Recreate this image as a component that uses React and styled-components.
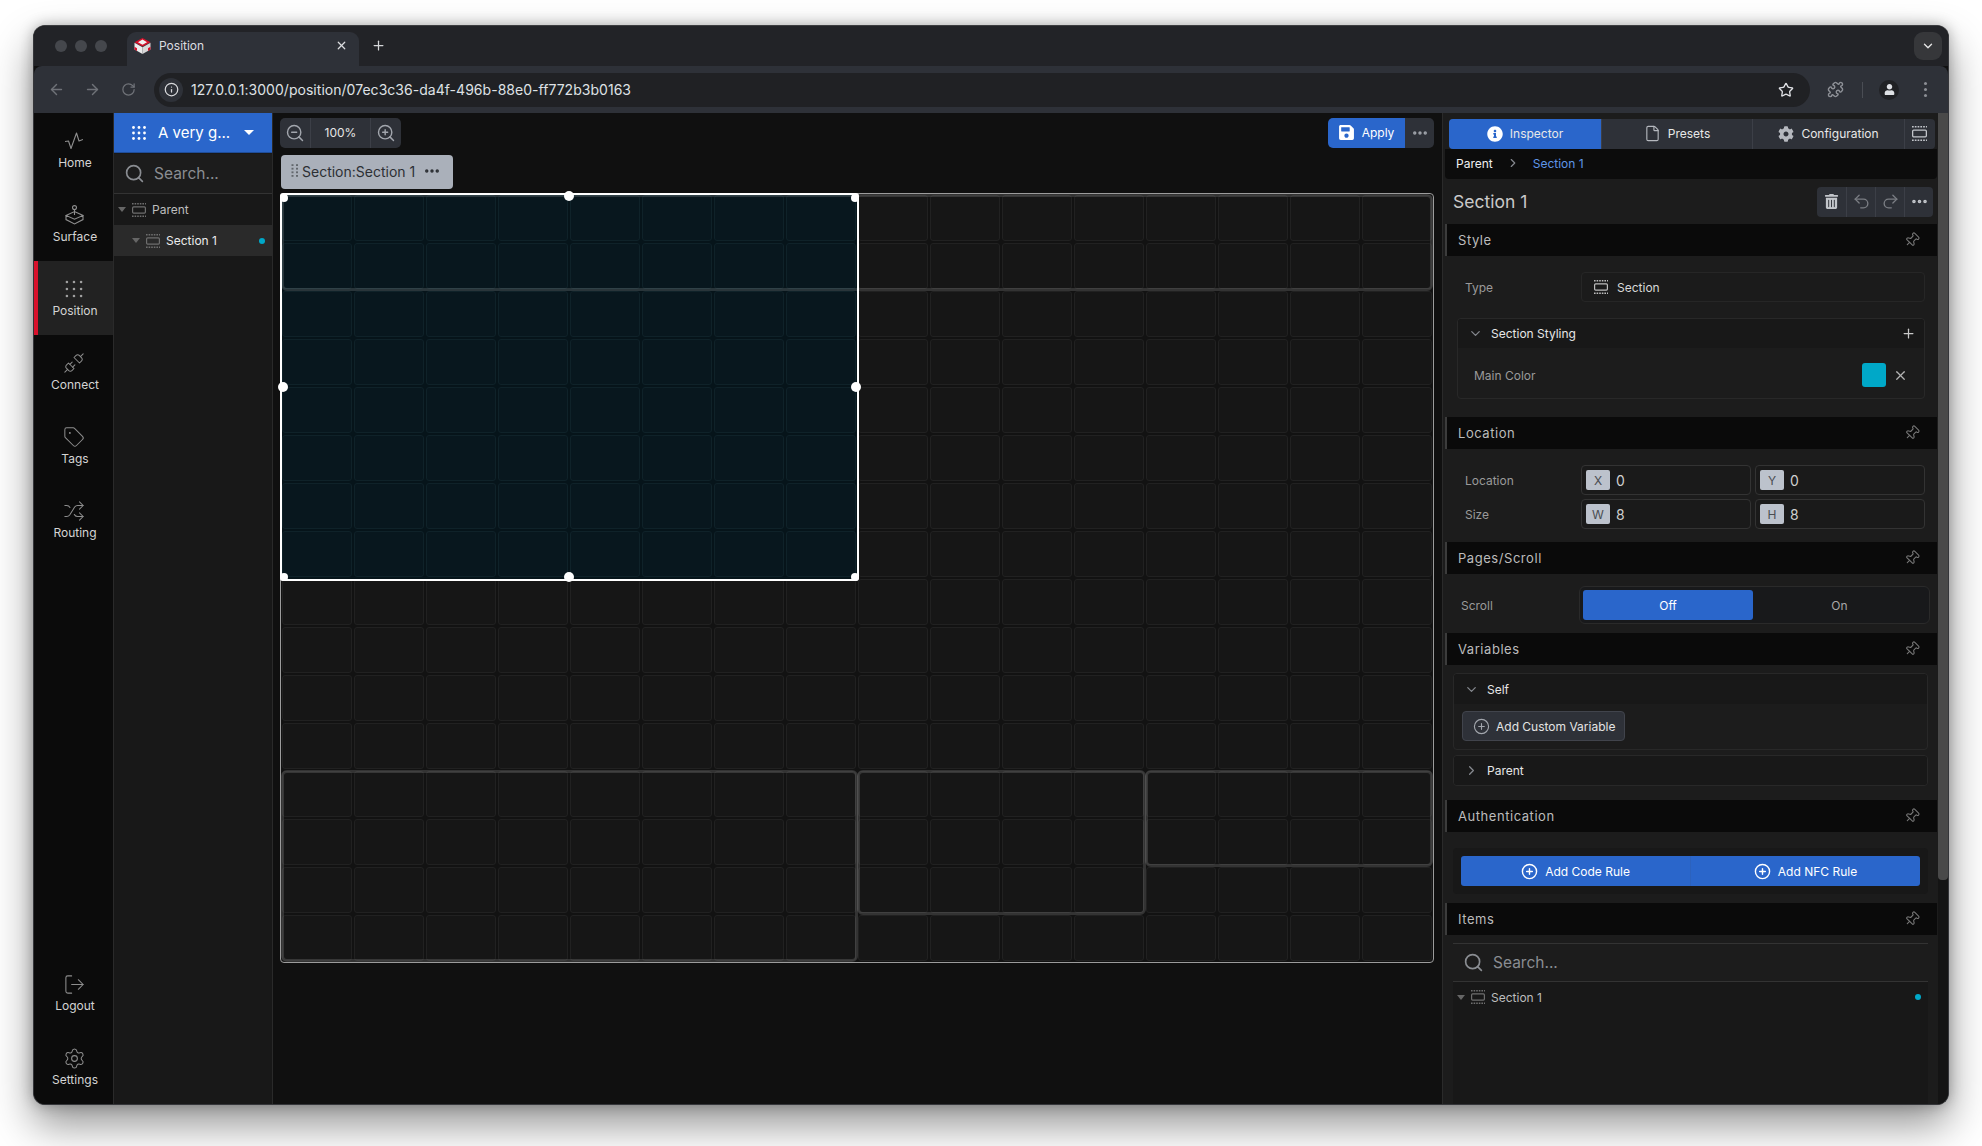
import React from 'react';
import styled, { createGlobalStyle } from 'styled-components';
import {
  ArrowLeft, ArrowRight, RotateCw, Info, Star, Puzzle, ChevronDown, ChevronRight, Plus, X, Search,
  ZoomIn, ZoomOut, Unplug, Tag, Shuffle, LogOut, Settings, File, Undo2, Redo2, Pin, CirclePlus, Ellipsis,
} from 'lucide-react';
import { FaCog, FaSave, FaTrashAlt, FaInfoCircle, FaUser } from 'react-icons/fa';

const Global = createGlobalStyle`
  html, body { margin: 0; padding: 0; background: #fff; }
  body { font-family: Inter, "Liberation Sans", sans-serif; width: 1982px; height: 1146px; overflow: hidden; }
  * { box-sizing: border-box; }
`;

const Page = styled.div`
  padding: 25px 0 0 33px;
`;
const Win = styled.div`
  width: 1916px;
  height: 1080px;
  border-radius: 12px;
  overflow: hidden;
  background: #101010;
  display: flex;
  flex-direction: column;
  box-shadow: 0 20px 42px rgba(0,0,0,.42), 0 0 14px rgba(0,0,0,.28);
  border: 1px solid #35363a;
  border-top-color: #3c3d40;
`;

/* browser chrome */
const TabStrip = styled.div`
  height: 40px;
  flex: none;
  background: #222327;
  display: flex;
  align-items: flex-end;
  padding-left: 21px;
`;
const Lights = styled.div`
  display: flex;
  gap: 8px;
  height: 34px;
  padding-top: 8px;
  width: 72px;
`;
const Light = styled.span`
  width: 12px;
  height: 12px;
  border-radius: 50%;
  background: #45474c;
`;
const BrowserTab = styled.div`
  width: 232px;
  height: 34px;
  background: #2e3138;
  border-radius: 9px 9px 0 0;
  display: flex;
  align-items: center;
  padding: 0 11px 7px 7px;
  gap: 8px;
  color: #dcdde0;
  font-size: 12px;
`;
const TabTitle = styled.span`
  flex: 1;
`;
const NewTab = styled.div`
  height: 34px;
  width: 38px;
  padding-bottom: 7px;
  display: flex;
  align-items: center;
  justify-content: center;
  color: #d5d6d9;
`;
const StripSpacer = styled.div`
  flex: 1;
`;
const TabMenu = styled.div`
  width: 28px;
  height: 28px;
  margin: 0 6px 6px 0;
  border-radius: 9px;
  background: #36373a;
  color: #e3e3e3;
  display: flex;
  align-items: center;
  justify-content: center;
`;
const Toolbar = styled.div`
  height: 47px;
  flex: none;
  background: #2e3138;
  border-radius: 8px 8px 0 0;
  display: flex;
  align-items: center;
  padding: 0 0 0 4px;
  color: #6f7278;
`;
const NavBtn = styled.div`
  width: 36px;
  display: flex;
  justify-content: center;
  color: #6f7278;
`;
const Address = styled.div`
  width: 1656px;
  height: 34px;
  margin-left: 8px;
  border-radius: 17px;
  background: #202124;
  display: flex;
  align-items: center;
  padding: 0 16px 0 5px;
  color: #dfe1e5;
`;
const InfoBadge = styled.div`
  width: 24px;
  height: 24px;
  border-radius: 50%;
  background: #2e3138;
  display: flex;
  align-items: center;
  justify-content: center;
  color: #d7d8db;
  margin-right: 8px;
`;
const Url = styled.span`
  flex: 1;
  font-size: 14px;
  letter-spacing: .03px;
  padding-bottom: 1px;
`;
const ToolRight = styled.div`
  display: flex;
  align-items: center;
  margin-left: 17px;
  color: #8c8f95;
`;
const Sep = styled.span`
  width: 1px;
  height: 16px;
  background: #4a4d54;
  margin: 0 16px 0 18px;
`;
const Avatar = styled.div`
  width: 20px;
  height: 20px;
  border-radius: 50%;
  background: #202124;
  color: #dfe1e5;
  display: flex;
  align-items: center;
  justify-content: center;
  margin-right: 25px;
`;
const VDots = styled.div`
  display: flex;
  flex-direction: column;
  gap: 3px;
`;
const VDot = styled.span`
  width: 3px;
  height: 3px;
  border-radius: 50%;
  background: #8c8f95;
`;

/* app */
const AppBody = styled.div`
  flex: 1;
  min-height: 0;
  display: flex;
`;
const Sidebar = styled.nav`
  width: 80px;
  flex: none;
  background: #0b0b0b;
  border-right: 1px solid #2a2a2a;
  display: flex;
  flex-direction: column;
`;
const SideSpacer = styled.div`
  flex: 1;
`;
const SideItem = styled.div`
  height: 74px;
  flex: none;
  display: flex;
  flex-direction: column;
  align-items: center;
  padding: ${p => p.$pt}px 0 0 3px;
  gap: 2px;
  color: #d4d4d4;
  font-size: 12px;
  line-height: 15px;
  background: ${p => (p.$active ? '#222222' : 'transparent')};
  box-shadow: ${p => (p.$active ? 'inset 4px 0 0 #d8112b' : 'none')};
`;
const SideIcon = styled.div`
  height: 24px;
  margin: 1px 2px 0 0;
  display: flex;
  align-items: center;
  justify-content: center;
  color: #8e8e8e;
`;
const Tree = styled.div`
  width: 159px;
  flex: none;
  background: #181818;
  border-right: 1px solid #2a2a2a;
  display: flex;
  flex-direction: column;
`;
const ProjectHead = styled.div`
  height: 40px;
  background: #2a66cb;
  color: #fff;
  display: flex;
  align-items: center;
  padding: 0 18px;
  font-size: 15px;
  gap: 12px;
  border-bottom: 1px solid #1f4d99;
`;
const ProjectName = styled.span`
  flex: 1;
  white-space: nowrap;
`;
const CaretDown = styled.span`
  width: 0;
  height: 0;
  flex: none;
  border-left: ${p => p.$s || 5}px solid transparent;
  border-right: ${p => p.$s || 5}px solid transparent;
  border-top: ${p => (p.$s ? p.$s + 1 : 5)}px solid ${p => p.$c || '#fff'};
`;
const SearchBox = styled.div`
  height: 41px;
  display: flex;
  align-items: center;
  gap: 9px;
  padding-left: 10px;
  background: #1c1c1c;
  border-top: 1px solid #181818;
  border-bottom: 1px solid #333;
  color: #8a8d92;
  font-size: 15.5px;
`;
const TreeRow = styled.div`
  height: 31px;
  display: flex;
  align-items: center;
  padding-left: ${p => p.$indent}px;
  gap: 6px;
  font-size: 12px;
  color: ${p => (p.$sel ? '#ececec' : '#bdbdbd')};
  background: ${p => (p.$sel ? '#2a2a2a' : 'transparent')};
  padding-right: 7px;
`;
const RowText = styled.span`
  flex: 1;
`;
const Dot = styled.span`
  width: 6px;
  height: 6px;
  border-radius: 50%;
  background: #00a8c8;
`;

const Main = styled.main`
  flex: 1;
  min-width: 0;
  background: #101010;
  padding: 5px 8px 0 7px;
  display: flex;
  flex-direction: column;
`;
const TopBar = styled.div`
  display: flex;
  justify-content: space-between;
  height: 30px;
`;
const ZoomGroup = styled.div`
  display: flex;
  width: 121px;
  height: 30px;
  background: #2e3138;
  border-radius: 5px;
  color: #a2a6ad;
  align-items: center;
`;
const ZoomBtn = styled.div`
  width: 30px;
  height: 30px;
  display: flex;
  align-items: center;
  justify-content: center;
`;
const ZoomValue = styled.div`
  flex: 1;
  height: 30px;
  line-height: 29px;
  text-align: center;
  color: #e6e6e6;
  font-size: 12px;
  border-left: 1px solid #3c3f47;
  border-right: 1px solid #3c3f47;
`;
const ApplyGroup = styled.div`
  display: flex;
  height: 30px;
  border-radius: 5px;
  overflow: hidden;
`;
const ApplyBtn = styled.div`
  width: 77px;
  background: #2a66cb;
  color: #fff;
  font-size: 12px;
  display: flex;
  align-items: center;
  justify-content: center;
  gap: 7px;
  padding: 0 1px 1px 0;
`;
const ApplyMore = styled.div`
  width: 29px;
  background: #2e3138;
  color: #9ea2a9;
  display: flex;
  align-items: center;
  justify-content: center;
`;
const ItemLabel = styled.div`
  margin: 7px 0 4px 1px;
  width: 172px;
  height: 34px;
  flex: none;
  background: #aab0ba;
  color: #2c2f34;
  border-radius: 4px;
  font-size: 14px;
  display: flex;
  align-items: center;
  padding: 0 0 2px 10px;
  gap: 3px;
  & > svg:last-child { margin-left: 5px; }
`;
const Canvas = styled.div`
  position: relative;
  width: 1154px;
  height: 770px;
  flex: none;
  border: 1px solid #9c9c9c;
  border-radius: 4px;
  background: #121212;
`;
const SelectedBack = styled.div`
  position: absolute;
  left: 0;
  top: 0;
  width: 577px;
  height: 385px;
  background: #06141a;
`;
const CellGrid = styled.div`
  position: relative;
  display: grid;
  grid-template-columns: repeat(16, 72px);
  grid-template-rows: repeat(16, 48px);
`;
const Cell = styled.div`
  margin: 1px;
  border-radius: 3px;
  border: 1px solid ${p => (p.$sel ? '#0f2229' : '#212121')};
  background: ${p => (p.$sel ? '#08171e' : '#161616')};
`;
const SectionLayer = styled.div`
  position: absolute;
  inset: 0;
  display: grid;
  grid-template-columns: repeat(16, 72px);
  grid-template-rows: repeat(16, 48px);
`;
const SectionBox = styled.div`
  grid-column: ${p => p.$c + 1} / span ${p => p.$w};
  grid-row: ${p => p.$r + 1} / span ${p => p.$h};
  margin: 0 ${p => (p.$c + p.$w === 16 ? '0' : '-1px')} ${p => (p.$r + p.$h === 16 ? '0' : '-1px')} 0;
  border: 3px solid rgba(255,255,255,.14);
  border-radius: 6px;
`;
const SelectedFrame = styled.div`
  position: absolute;
  left: -1px;
  top: -1px;
  width: 579px;
  height: 388px;
  border: 2px solid #fff;
  border-radius: 3px;
`;
const Handle = styled.span`
  position: absolute;
  width: ${p => p.$s}px;
  height: ${p => p.$s}px;
  border-radius: 50%;
  background: #fff;
  left: ${p => p.$x}px;
  top: ${p => p.$y}px;
`;

/* right panel */
const Panel = styled.aside`
  width: 506px;
  flex: none;
  background: #1c1c1c;
  border-left: 1px solid #2a2a2a;
  display: flex;
`;
const PanelBody = styled.div`
  flex: 1;
  min-width: 0;
  display: flex;
  flex-direction: column;
`;
const ScrollTrack = styled.div`
  width: 10px;
  flex: none;
  background: #141414;
`;
const ScrollThumb = styled.div`
  height: 767px;
  background: #494949;
  border-radius: 0 0 4px 4px;
`;
const Tabs = styled.div`
  margin: 6px 3px 0 6px;
  height: 30px;
  flex: none;
  display: flex;
  background: #2e3138;
  border-radius: 4px;
  overflow: hidden;
`;
const TabBtn = styled.div`
  width: ${p => p.$w}px;
  flex: none;
  display: flex;
  align-items: center;
  justify-content: center;
  gap: 7px;
  font-size: 12px;
  padding-bottom: 1px;
  color: #e8e8e8;
  background: ${p => (p.$on ? '#2a66cb' : 'transparent')};
  border-left: ${p => (p.$first ? 'none' : '1px solid #3c3f47')};
  & > svg { color: ${p => (p.$on ? '#fff' : '#b5b8be')}; }
`;
const Crumbs = styled.div`
  height: 30px;
  flex: none;
  margin: 0 1px 0 2px;
  background: #0c0c0c;
  border-radius: 0 0 4px 4px;
  display: flex;
  align-items: center;
  padding: 0 0 2px 11px;
  font-size: 12px;
  color: #f0f0f0;
  gap: 13px;
  & > svg { color: #85888e; }
`;
const CrumbActive = styled.span`
  color: #5f96e8;
`;
const TitleRow = styled.div`
  height: 45px;
  flex: none;
  display: flex;
  align-items: center;
  justify-content: space-between;
  padding: 0 5px 0 10px;
  font-size: 17.5px;
  color: #c9c9c9;
`;
const ActionGroup = styled.div`
  display: flex;
  height: 30px;
  background: #2e3138;
  border-radius: 4px;
  overflow: hidden;
`;
const ActionBtn = styled.div`
  width: 29px;
  display: flex;
  align-items: center;
  justify-content: center;
  color: ${p => p.$c || '#7a7d83'};
  border-left: ${p => (p.$first ? 'none' : '1px solid #3c3f47')};
`;
const SectionHead = styled.div`
  height: 32px;
  flex: none;
  margin: 0 1px 0 2px;
  background: #0a0a0a;
  border-left: 2px solid #3c3c3c;
  display: flex;
  align-items: center;
  justify-content: space-between;
  padding: 0 17px 0 11px;
  font-size: 13px;
  letter-spacing: .55px;
  color: #bcbcbc;
  & > svg { color: #787878; transform: rotate(45deg); }
`;
const SectionBody = styled.div`
  padding: ${p => p.$t}px ${p => p.$r}px ${p => p.$b}px ${p => p.$l}px;
  flex: none;
  display: flex;
  flex-direction: column;
  gap: ${p => p.$g || 0}px;
`;
const FieldRow = styled.div`
  display: flex;
  align-items: center;
  gap: 4px;
`;
const FieldLabel = styled.div`
  width: ${p => p.$w || 120}px;
  flex: none;
  padding-left: ${p => p.$pl ?? 8}px;
  font-size: 12px;
  color: #9a9a9a;
`;
const TypeBox = styled.div`
  flex: 1;
  height: 30px;
  border: 1px solid #262626;
  border-radius: 4px;
  display: flex;
  align-items: center;
  padding-left: 12px;
  gap: 9px;
  color: #d8d8d8;
  font-size: 12px;
  background: #1b1b1b;
`;
const Card = styled.div`
  border: 1px solid #282828;
  border-radius: 4px;
  overflow: hidden;
`;
const CardHead = styled.div`
  height: ${p => p.$h || 29}px;
  display: flex;
  align-items: center;
  gap: 8px;
  padding: 0 ${p => p.$pr || 9}px 0 10px;
  background: #181818;
  font-size: 12px;
  color: #e6e6e6;
  & > svg { color: #85888e; flex: none; }
`;
const Grow = styled.span`
  flex: 1;
`;
const ColorRow = styled.div`
  height: 50px;
  display: flex;
  align-items: center;
  padding: 4px 16px 0 16px;
  font-size: 12px;
  color: #9a9a9a;
  & > svg { color: #b4b4b4; margin-left: 7px; }
`;
const Swatch = styled.span`
  width: 24px;
  height: 24px;
  border-radius: 3px;
  background: #00a8c8;
`;
const NumBox = styled.div`
  flex: 1;
  height: 30px;
  border: 1px solid #333;
  border-radius: 4px;
  display: flex;
  align-items: center;
  padding-left: 4px;
  gap: 6px;
  font-size: 14px;
  color: #cfcfcf;
  background: #1a1a1a;
`;
const Chip = styled.span`
  width: 24px;
  height: 20px;
  border-radius: 2px;
  background: #bcc2cc;
  color: #4a4d52;
  font-size: 12px;
  display: flex;
  align-items: center;
  justify-content: center;
`;
const Segmented = styled.div`
  flex: 1;
  height: 38px;
  border: 1px solid #2a2a2a;
  border-radius: 6px;
  padding: 3px;
  display: flex;
  background: #18191b;
`;
const Seg = styled.div`
  flex: ${p => (p.$on ? '0 0 170px' : '1')};
  border-radius: 3px;
  display: flex;
  align-items: center;
  justify-content: center;
  font-size: 12px;
  color: ${p => (p.$on ? '#fff' : '#a8a8a8')};
  background: ${p => (p.$on ? '#2a66cb' : 'transparent')};
`;
const VarBtn = styled.div`
  margin: 7px 0 8px 8px;
  width: 163px;
  height: 30px;
  background: #2e3138;
  border: 1px solid #41444c;
  border-radius: 4px;
  display: flex;
  align-items: center;
  padding-left: 10px;
  gap: 6px;
  color: #e4e4e4;
  font-size: 12px;
  & > svg { color: #a2a6ad; }
`;
const RuleCard = styled.div`
  background: #181818;
  border-radius: 4px;
  padding: 8px;
`;
const RuleGroup = styled.div`
  display: flex;
  height: 30px;
  border-radius: 3px;
  overflow: hidden;
  background: #2a66cb;
`;
const RuleBtn = styled.div`
  flex: 1;
  display: flex;
  align-items: center;
  justify-content: center;
  gap: 7px;
  color: #fff;
  font-size: 12px;
  border-left: ${p => (p.$first ? 'none' : '1px solid #2c62bd')};
`;
const ItemList = styled.div`
  flex: 1;
  margin: 0 10px;
  background: #181818;
`;
const ItemsSearch = styled(SearchBox)`
  margin: 8px 10px 0;
  height: 39px;
  border-top: 1px solid #333;
`;
const ItemRow = styled(TreeRow)`
  height: 30px;
  padding: 0 7px 0 4px;
`;

const SectionIcon = ({ c = '#6e6e6e', w = 14, h = 14 }) => (
  <svg width={w} height={h} viewBox="0 0 14 14" fill="none" stroke={c}>
    <path d="M0 .8h14M0 13.2h14" strokeDasharray="1.6 1" strokeWidth="1.4" />
    <rect x=".6" y="3.9" width="12.8" height="6.2" rx="1" strokeWidth="1.2" />
  </svg>
);
const DotGrid = ({ s = 14, r = 1.4, c = '#fff' }) => (
  <svg width={s} height={s} viewBox="0 0 14 14" fill={c}>
    {[1.5, 7, 12.5].flatMap(y => [1.5, 7, 12.5].map(x => <circle key={x + '-' + y} cx={x} cy={y} r={r} />))}
  </svg>
);
const DragDots = () => (
  <svg width="8" height="14" viewBox="0 0 8 14" fill="#62666c">
    {[1, 4.6, 8.2, 11.8].flatMap(y => [1.5, 6].map(x => <rect key={x + '-' + y} x={x - 1} y={y - .8} width="2" height="1.8" />))}
  </svg>
);
const Favicon = () => (
  <svg width="17" height="16" viewBox="0 0 17 16">
    <path d="M8.5 0 16.5 4.2 8.5 8.6.5 4.2Z" fill="#d5102a" />
    <path d="M8.5 1.6 13 4.2 8.5 6.8 4 4.2Z" fill="#f1f1f1" />
    <path d="M.5 4.8 8.5 9.2V16L.5 11.4Z" fill="#ececec" />
    <path d="M16.5 4.8 8.5 9.2V16L16.5 11.4Z" fill="#d8d8d8" />
    <path d="M.5 8.8 3 10.2V13L.5 11.4ZM16.5 8.8 14 10.2V13L16.5 11.4Z" fill="#d5102a" />
  </svg>
);
const Pulse = () => (
  <svg width="18" height="18" viewBox="0 0 18 18" fill="none" stroke="currentColor" strokeWidth="1.1" strokeLinejoin="round">
    <path d="M0 9.5 3.5 9 6 16.5 11.5 1 14 9 18 7.5" />
  </svg>
);
const Joystick = () => (
  <svg width="19" height="20" viewBox="0 0 19 20" fill="none" stroke="currentColor" strokeWidth="1.1">
    <circle cx="9.5" cy="2.6" r="2" />
    <path d="M9.5 4.6V10M1 10.4 9.5 6.6 18 10.4 9.5 14.2ZM1 10.4V14.6L9.5 19 18 14.6V10.4" />
  </svg>
);

const SideNav = ({ icon, label, active, pt = 15 }) => (
  <SideItem $active={active} $pt={pt}><SideIcon>{icon}</SideIcon><span>{label}</span></SideItem>
);
const Head = ({ children }) => (
  <SectionHead>{children}<Pin size={16} strokeWidth={1.6} /></SectionHead>
);

const cells = Array.from({ length: 256 }, (_, i) => ({ i, sel: i % 16 < 8 && i < 128 }));
const boxes = [
  { c: 0, r: 0, w: 16, h: 2 },
  { c: 0, r: 12, w: 8, h: 4 },
  { c: 8, r: 12, w: 4, h: 3 },
  { c: 12, r: 12, w: 4, h: 2 },
];
const handles = [
  { x: -2, y: -1, s: 8 }, { x: 282, y: -4, s: 10 }, { x: 569, y: -1, s: 8 },
  { x: -4, y: 187, s: 10 }, { x: 569, y: 187, s: 10 },
  { x: -2, y: 378, s: 8 }, { x: 282, y: 377, s: 10 }, { x: 569, y: 378, s: 8 },
];

export default function App() {
  return (
    <Page>
      <Global />
      <Win>
        <TabStrip>
          <Lights><Light /><Light /><Light /></Lights>
          <BrowserTab>
            <Favicon />
            <TabTitle>Position</TabTitle>
            <X size={13} strokeWidth={2.2} />
          </BrowserTab>
          <NewTab><Plus size={15} strokeWidth={2} /></NewTab>
          <StripSpacer />
          <TabMenu><ChevronDown size={14} strokeWidth={2.4} /></TabMenu>
        </TabStrip>
        <Toolbar>
          <NavBtn><ArrowLeft size={17} /></NavBtn>
          <NavBtn><ArrowRight size={17} /></NavBtn>
          <NavBtn><RotateCw size={15} /></NavBtn>
          <Address>
            <InfoBadge><Info size={15} /></InfoBadge>
            <Url>127.0.0.1:3000/position/07ec3c36-da4f-496b-88e0-ff772b3b0163</Url>
            <Star size={16} strokeWidth={2} />
          </Address>
          <ToolRight>
            <Puzzle size={17} />
            <Sep />
            <Avatar><FaUser size={11} /></Avatar>
            <VDots><VDot /><VDot /><VDot /></VDots>
          </ToolRight>
        </Toolbar>
        <AppBody>
          <Sidebar>
            <SideNav icon={<Pulse />} label="Home" />
            <SideNav icon={<Joystick />} label="Surface" />
            <SideNav icon={<DotGrid s={18} r={1} c="#a0a0a0" />} label="Position" active />
            <SideNav icon={<Unplug size={22} strokeWidth={1.1} />} label="Connect" />
            <SideNav icon={<Tag size={22} strokeWidth={1.1} />} label="Tags" />
            <SideNav icon={<Shuffle size={22} strokeWidth={1.1} />} label="Routing" />
            <SideSpacer />
            <SideNav icon={<LogOut size={23} strokeWidth={1.1} />} label="Logout" pt={15} />
            <SideNav icon={<Settings size={23} strokeWidth={1.1} />} label="Settings" pt={15} />
          </Sidebar>
          <Tree>
            <ProjectHead><DotGrid /><ProjectName>A very g...</ProjectName><CaretDown /></ProjectHead>
            <SearchBox><Search size={21} strokeWidth={1.9} />Search...</SearchBox>
            <TreeRow $indent={4}><CaretDown $s={4} $c="#666" /><SectionIcon /><RowText>Parent</RowText></TreeRow>
            <TreeRow $indent={18} $sel><CaretDown $s={4} $c="#666" /><SectionIcon /><RowText>Section 1</RowText><Dot /></TreeRow>
          </Tree>
          <Main>
            <TopBar>
              <ZoomGroup>
                <ZoomBtn><ZoomOut size={20} strokeWidth={1.7} /></ZoomBtn>
                <ZoomValue>100%</ZoomValue>
                <ZoomBtn><ZoomIn size={20} strokeWidth={1.7} /></ZoomBtn>
              </ZoomGroup>
              <ApplyGroup>
                <ApplyBtn><FaSave size={17} />Apply</ApplyBtn>
                <ApplyMore><Ellipsis size={18} strokeWidth={2.6} /></ApplyMore>
              </ApplyGroup>
            </TopBar>
            <ItemLabel><DragDots />Section:Section 1<Ellipsis size={18} strokeWidth={2.6} /></ItemLabel>
            <Canvas>
              <SelectedBack />
              <CellGrid>
                {cells.map(c => <Cell key={c.i} $sel={c.sel} />)}
              </CellGrid>
              <SectionLayer>
                {boxes.map(b => <SectionBox key={b.c + '-' + b.r} $c={b.c} $r={b.r} $w={b.w} $h={b.h} />)}
              </SectionLayer>
              <SelectedFrame>
                {handles.map(h => <Handle key={h.x + '-' + h.y} $x={h.x} $y={h.y} $s={h.s} />)}
              </SelectedFrame>
            </Canvas>
          </Main>
          <Panel>
            <PanelBody>
              <Tabs>
                <TabBtn $w={152} $on $first><FaInfoCircle size={16} />Inspector</TabBtn>
                <TabBtn $w={151}><File size={17} strokeWidth={1.6} />Presets</TabBtn>
                <TabBtn $w={152}><FaCog size={16} />Configuration</TabBtn>
                <TabBtn $w={30}><SectionIcon c="#c2c5ca" w={15} h={15} /></TabBtn>
              </Tabs>
              <Crumbs>
                <span>Parent</span>
                <ChevronRight size={14} />
                <CrumbActive>Section 1</CrumbActive>
              </Crumbs>
              <TitleRow>
                <span>Section 1</span>
                <ActionGroup>
                  <ActionBtn $first $c="#c2c5ca"><FaTrashAlt size={15} /></ActionBtn>
                  <ActionBtn><Undo2 size={19} strokeWidth={1.7} /></ActionBtn>
                  <ActionBtn><Redo2 size={19} strokeWidth={1.7} /></ActionBtn>
                  <ActionBtn $c="#c2c5ca"><Ellipsis size={19} strokeWidth={2.6} /></ActionBtn>
                </ActionGroup>
              </TitleRow>
              <Head>Style</Head>
              <SectionBody $t={16} $r={13} $b={18} $l={14} $g={16}>
                <FieldRow>
                  <FieldLabel>Type</FieldLabel>
                  <TypeBox><SectionIcon c="#bdbdbd" />Section</TypeBox>
                </FieldRow>
                <Card>
                  <CardHead $pr={8}>
                    <ChevronDown size={15} />
                    <Grow>Section Styling</Grow>
                    <Plus size={15} color="#c8c8c8" />
                  </CardHead>
                  <ColorRow>
                    <Grow>Main Color</Grow>
                    <Swatch />
                    <X size={15} strokeWidth={2} />
                  </ColorRow>
                </Card>
              </SectionBody>
              <Head>Location</Head>
              <SectionBody $t={16} $r={13} $b={13} $l={14} $g={4}>
                <FieldRow>
                  <FieldLabel>Location</FieldLabel>
                  <NumBox><Chip>X</Chip>0</NumBox>
                  <NumBox><Chip>Y</Chip>0</NumBox>
                </FieldRow>
                <FieldRow>
                  <FieldLabel>Size</FieldLabel>
                  <NumBox><Chip>W</Chip>8</NumBox>
                  <NumBox><Chip>H</Chip>8</NumBox>
                </FieldRow>
              </SectionBody>
              <Head>Pages/Scroll</Head>
              <SectionBody $t={12} $r={8} $b={9} $l={10}>
                <FieldRow>
                  <FieldLabel $pl={8} $w={122}>Scroll</FieldLabel>
                  <Segmented><Seg $on>Off</Seg><Seg>On</Seg></Segmented>
                </FieldRow>
              </SectionBody>
              <Head>Variables</Head>
              <SectionBody $t={8} $r={10} $b={14} $l={10} $g={5}>
                <Card>
                  <CardHead $h={30}><ChevronDown size={15} />Self</CardHead>
                  <VarBtn><CirclePlus size={17} strokeWidth={1.6} />Add Custom Variable</VarBtn>
                </Card>
                <Card>
                  <CardHead $h={29}><ChevronRight size={15} />Parent</CardHead>
                </Card>
              </SectionBody>
              <Head>Authentication</Head>
              <SectionBody $t={16} $r={10} $b={9} $l={10}>
                <RuleCard>
                  <RuleGroup>
                    <RuleBtn $first><CirclePlus size={17} strokeWidth={2} />Add Code Rule</RuleBtn>
                    <RuleBtn><CirclePlus size={17} strokeWidth={2} />Add NFC Rule</RuleBtn>
                  </RuleGroup>
                </RuleCard>
              </SectionBody>
              <Head>Items</Head>
              <ItemsSearch><Search size={21} strokeWidth={1.9} />Search...</ItemsSearch>
              <ItemList>
                <ItemRow $indent={4}><CaretDown $s={4} $c="#666" /><SectionIcon /><RowText>Section 1</RowText><Dot /></ItemRow>
              </ItemList>
            </PanelBody>
            <ScrollTrack><ScrollThumb /></ScrollTrack>
          </Panel>
        </AppBody>
      </Win>
    </Page>
  );
}
